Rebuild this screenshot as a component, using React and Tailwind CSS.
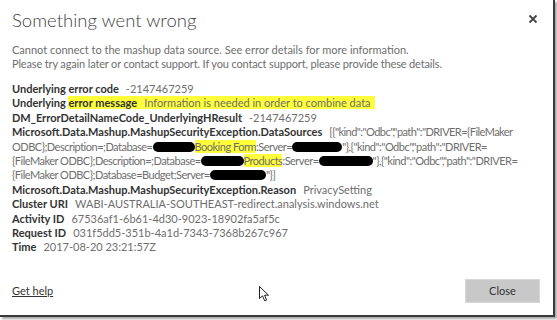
import React from "react";

const Blob = ({ w }) => (
  <span
    className="inline-block h-[10px] rounded-full bg-black align-[-1px]"
    style={{ width: w }}
  />
);

const Row = ({ label, children }) => (
  <div className="whitespace-nowrap">
    <span className="font-bold text-[#333]">{label}</span>
    <span className="ml-[7px] text-[#6e6e6e]">{children}</span>
  </div>
);

const L = "{";
const R = "}";

export default function App() {
  return (
    <div className="relative h-[320px] w-[557px] overflow-hidden bg-white">
      <div
        className="flex h-[317px] w-[555px] flex-col border-r-2 border-b-2 border-[#3a3a3a] bg-white shadow-[2px_2px_2px_rgba(0,0,0,0.35)]"
        style={{ fontFamily: "Lato, 'Liberation Sans', sans-serif" }}
      >
        <div className="flex items-start justify-between pl-[12px] pr-[13px] pt-[8px]">
          <div className="text-[18.5px] font-light leading-[24px] text-[#444]">
            Something went wrong
          </div>
          <svg width="10" height="10" viewBox="0 0 10 10" className="mt-[6px] mr-[2px]">
            <path d="M1.5 1.5 L8.5 8.5 M8.5 1.5 L1.5 8.5" stroke="#444" strokeWidth="1.8" />
          </svg>
        </div>
        <div className="mt-[11px] pl-[12px] text-[11px] leading-[14px] text-[#6e6e6e]">
          <div>Cannot connect to the mashup data source. See error details for more information.</div>
          <div className="tracking-[-0.15px]">Please try again later or contact support. If you contact support, please provide these details.</div>
        </div>
        <div className="mt-[11px] pl-[12px] pr-[10px] text-[11px] leading-[14.4px]">
          <Row label="Underlying error code">-2147467259</Row>
          <div className="whitespace-nowrap">
            <span className="font-bold text-[#333]">Underlying </span>
            <span className="bg-[#ffff3a] pr-[4px]">
              <span className="font-bold text-[#333]">error message</span>
              <span className="ml-[7px] text-[#6e6e6e]">Information is needed in order to combine data</span>
            </span>
          </div>
          <Row label="DM_ErrorDetailNameCode_UnderlyingHResult">-2147467259</Row>
          <div className="whitespace-nowrap text-[#6e6e6e]">
            <div>
              <span className="font-bold text-[#333]">Microsoft.Data.Mashup.MashupSecurityException.DataSources</span>
              <span className="ml-[7px] tracking-[-0.55px]">[{L}"kind":"Odbc","path":"DRIVER={L}FileMaker</span>
            </div>
            <div className="tracking-[-0.5px]">
              ODBC{R};Description=;Database=<Blob w={42} />
              <span className="bg-[#ffff3a]">Booking Form</span>:Server=<Blob w={50} />"{R},{L}"kind":"Odbc","path":"DRIVER=
            </div>
            <div className="tracking-[-0.5px]">
              {L}FileMaker ODBC{R};Description=;Database=<Blob w={43} />
              <span className="bg-[#ffff3a]">Products</span>:Server=<Blob w={54} />"{R},{L}"kind":"Odbc","path":"DRIVER=
            </div>
            <div className="tracking-[-0.5px]">
              {L}FileMaker ODBC{R};Database=Budget;Server=<Blob w={56} />"{R}]
            </div>
          </div>
          <Row label="Microsoft.Data.Mashup.MashupSecurityException.Reason">PrivacySetting</Row>
          <Row label="Cluster URI">WABI-AUSTRALIA-SOUTHEAST-redirect.analysis.windows.net</Row>
          <Row label="Activity ID">67536af1-6b61-4d30-9023-18902fa5af5c</Row>
          <Row label="Request ID">031f5dd5-351b-4a1d-7343-7368b267c967</Row>
          <Row label="Time">2017-08-20 23:21:57Z</Row>
        </div>
        <div className="mt-auto flex items-center justify-between pb-[12px] pl-[12px] pr-[13px]">
          <a className="text-[11px] text-[#333] underline">Get help</a>
          <button className="h-[24px] w-[75px] border border-[#d8d8d8] bg-[#c8c8c8] text-[11px] text-[#333]">
            Close
          </button>
        </div>
      </div>
      <svg
        className="absolute left-[259px] top-[286px]"
        width="11"
        height="16"
        viewBox="0 0 11 16"
      >
        <path
          d="M0.5 0.5 L0.5 12.5 L3.5 9.8 L5.7 14.8 L7.6 14 L5.5 9.2 L9.5 9.2 Z"
          fill="white"
          stroke="#222"
          strokeWidth="1"
          strokeLinejoin="round"
        />
      </svg>
    </div>
  );
}
